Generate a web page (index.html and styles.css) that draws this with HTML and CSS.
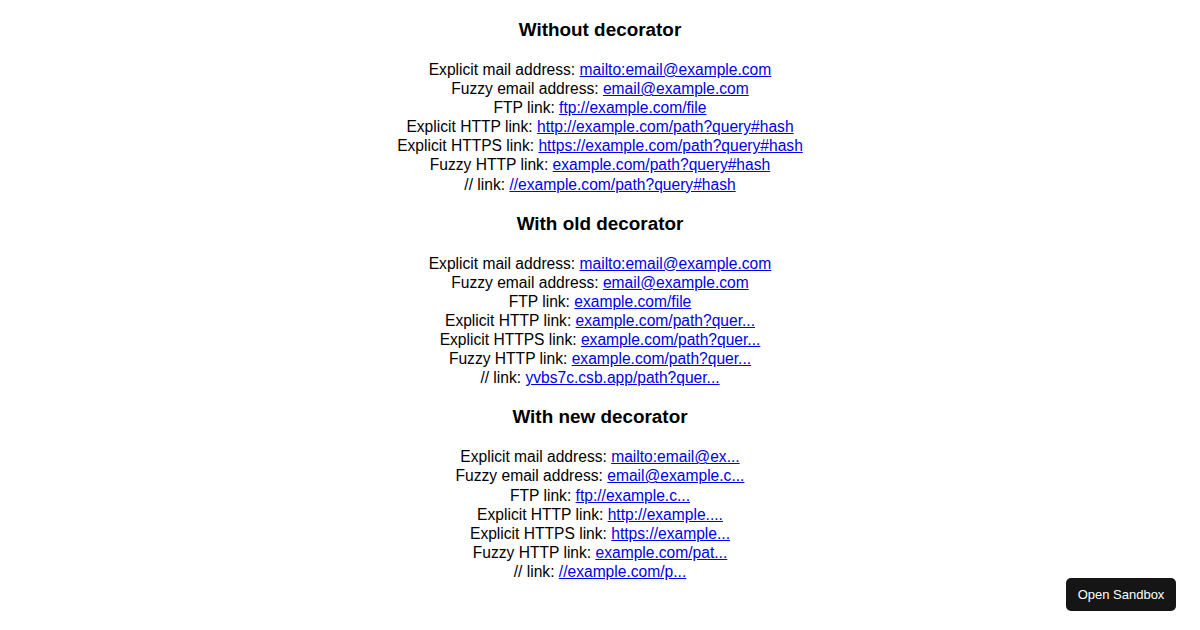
FILE: index.html
```html
<!DOCTYPE html>
<html>
<head>
<meta charset="utf-8">
<link rel="stylesheet" href="styles.css">
</head>
<body>
<div class="app">
  <h3>Without decorator</h3>
  <div class="list">
    <div>Explicit mail address: <a href="#">mailto:email@example.com</a></div>
    <div>Fuzzy email address: <a href="#">email@example.com</a></div>
    <div>FTP link: <a href="#">ftp://example.com/file</a></div>
    <div>Explicit HTTP link: <a href="#">http://example.com/path?query#hash</a></div>
    <div>Explicit HTTPS link: <a href="#">https://example.com/path?query#hash</a></div>
    <div>Fuzzy HTTP link: <a href="#">example.com/path?query#hash</a></div>
    <div>// link: <a href="#">//example.com/path?query#hash</a></div>
  </div>
  <h3>With old decorator</h3>
  <div class="list">
    <div>Explicit mail address: <a href="#">mailto:email@example.com</a></div>
    <div>Fuzzy email address: <a href="#">email@example.com</a></div>
    <div>FTP link: <a href="#">example.com/file</a></div>
    <div>Explicit HTTP link: <a href="#">example.com/path?quer...</a></div>
    <div>Explicit HTTPS link: <a href="#">example.com/path?quer...</a></div>
    <div>Fuzzy HTTP link: <a href="#">example.com/path?quer...</a></div>
    <div>// link: <a href="#">yvbs7c.csb.app/path?quer...</a></div>
  </div>
  <h3>With new decorator</h3>
  <div class="list">
    <div>Explicit mail address: <a href="#">mailto:email@ex...</a></div>
    <div>Fuzzy email address: <a href="#">email@example.c...</a></div>
    <div>FTP link: <a href="#">ftp://example.c...</a></div>
    <div>Explicit HTTP link: <a href="#">http://example....</a></div>
    <div>Explicit HTTPS link: <a href="#">https://example...</a></div>
    <div>Fuzzy HTTP link: <a href="#">example.com/pat...</a></div>
    <div>// link: <a href="#">//example.com/p...</a></div>
  </div>
</div>
<a class="sandbox" href="#">Open Sandbox</a>
</body>
</html>
```
FILE: styles.css
```css
html, body {
  margin: 0;
  padding: 0;
}
body {
  font-family: "Liberation Sans", Arial, sans-serif;
  font-size: 15.6px;
  color: #000;
  background: #fff;
}
.app {
  text-align: center;
  padding: 0 8px;
}
h3 {
  font-size: 18.9px;
  font-weight: bold;
  margin: 19px 0;
  line-height: 22px;
}
.list {
  line-height: 19.1px;
}
a {
  color: #0000ee;
  text-decoration: underline;
}
.sandbox {
  position: fixed;
  right: 24px;
  bottom: 19px;
  width: 110px;
  height: 33px;
  box-sizing: border-box;
  display: flex;
  align-items: center;
  justify-content: center;
  background: #151515;
  color: #fff;
  border-radius: 5px;
  font-size: 13px;
  text-decoration: none;
}
```
